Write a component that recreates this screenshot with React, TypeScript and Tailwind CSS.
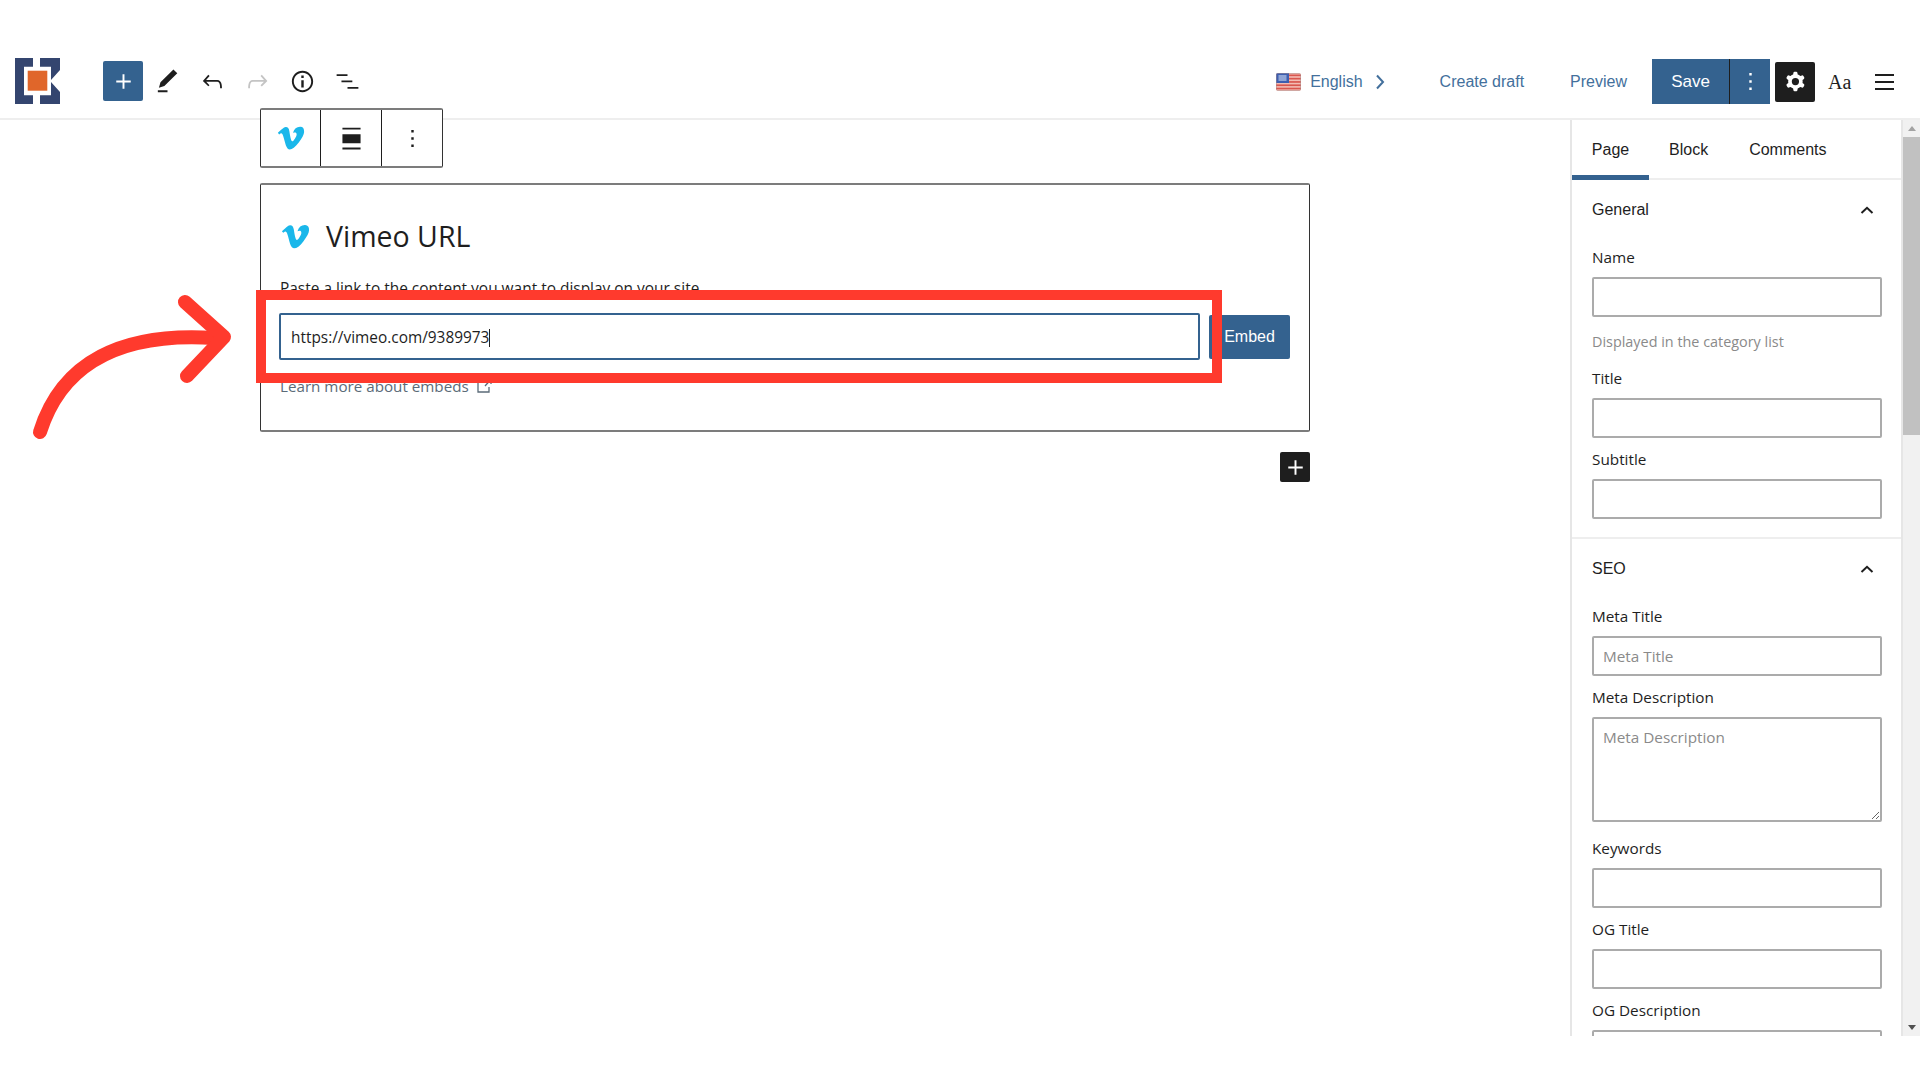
import { FaVimeoV } from "react-icons/fa";

const labelFont = "font-['Open_Sans','Noto_Sans',sans-serif]";
const arialFont = "font-['Liberation_Sans',Arial,sans-serif]";
const inputBox = "block h-10 w-full rounded-[2px] border-2 border-[#ababab] bg-white px-[9px] text-[15.300px] text-[#1e1e1e] outline-none placeholder:text-[#8a8a8a]";

function WpIcon({ d, className = "" }: { d: string; className?: string }) {
  return (
    <svg viewBox="0 0 24 24" width="29" height="29" fill="currentColor" fillRule="evenodd" className={className}>
      <path d={d} />
    </svg>
  );
}

const plus = "M18 11.2h-5.2V6h-1.6v5.2H6v1.6h5.2V18h1.6v-5.2H18z";
const pen = "M20.1 5.1L16.9 2 6.2 12.7l-1.3 4.4 4.5-1.3L20.1 5.1zM4 20.8h8v-1.5H4v1.5z";
const undo = "M18.3 11.7c-.6-.6-1.4-.9-2.3-.9H6.7l2.9-3.3-1.1-1-4.5 5L8.5 16l1-1-2.7-2.7H16c.5 0 .9.2 1.3.5 1 1 1 3.4 1 4.5v.3h1.5v-.2c0-1.5 0-4.3-1.5-5.7z";
const redo = "M15.6 6.5l-1.1 1 2.9 3.3H8c-.9 0-1.7.3-2.3.9-1.4 1.5-1.4 4.2-1.4 5.6v.2h1.5v-.3c0-1.1 0-3.5 1-4.5.3-.3.7-.5 1.3-.5h9.2L14.5 15l1.1 1.1 4.6-4.6-4.6-5z";
const info = "M12 3.2c-4.8 0-8.8 3.9-8.8 8.8 0 4.8 3.9 8.8 8.8 8.8 4.8 0 8.8-3.9 8.8-8.8 0-4.8-4-8.8-8.8-8.8zm0 16c-4 0-7.2-3.3-7.2-7.2C4.8 8 8 4.8 12 4.8s7.2 3.3 7.2 7.2c0 4-3.2 7.2-7.2 7.2zM11 17h2v-6h-2v6zm0-8h2V7h-2v2z";
const listView = "M3 6h9v1.5H3V6zm4 5.2h9v1.5H7v-1.5zm5 5.3h9V18h-9v-1.5z";
const gear = "M10.289 4.836A1 1 0 0111.275 4h1.306a1 1 0 01.987.836l.244 1.466c.787.26 1.503.679 2.108 1.218l1.393-.522a1 1 0 011.216.437l.653 1.13a1 1 0 01-.23 1.273l-1.148.944a6.025 6.025 0 010 2.435l1.149.946a1 1 0 01.23 1.272l-.653 1.13a1 1 0 01-1.216.437l-1.394-.522c-.605.54-1.32.958-2.108 1.218l-.244 1.466a1 1 0 01-.987.836h-1.306a1 1 0 01-.986-.836l-.244-1.466a5.995 5.995 0 01-2.108-1.218l-1.394.522a1 1 0 01-1.217-.436l-.653-1.131a1 1 0 01.23-1.272l1.149-.946a6.026 6.026 0 010-2.435l-1.148-.944a1 1 0 01-.23-1.272l.653-1.131a1 1 0 011.217-.437l1.393.522a5.994 5.994 0 012.108-1.218l.244-1.466zM14.929 12a3 3 0 11-6 0 3 3 0 016 0z";
const dots = "M13 19h-2v-2h2v2zm0-6h-2v-2h2v2zm0-6h-2V5h2v2z";
const align = "M4.500 3h15v1.600h-15zM4.500 8.500h15v7.500h-15zM4.500 19.500h15v1.600h-15z";

function Logo() {
  return (
    <svg viewBox="0 0 45 46" width="45" height="46" className="shrink-0">
      <path d="M0 0h18v8.700H9v28.600h9V46H0z" fill="#34456f" />
      <path d="M25 0H45V12L36 22V8.700H25z" fill="#34456f" />
      <path d="M36 24L45 34V46H25V37.300H36z" fill="#34456f" />
      <rect x="12.700" y="12.700" width="19.600" height="20" fill="#e0662a" />
    </svg>
  );
}

function Flag() {
  return (
    <svg viewBox="0 0 25 18" width="25" height="18" className="shrink-0 rounded-[2px]">
      <rect width="25" height="18" fill="#f3bdb4" />
      {[1.500, 4.800, 8.100, 11.400, 14.700].map((y) => (
        <rect key={y} y={y} width="25" height="1.700" fill="#d9574f" />
      ))}
      <rect width="13" height="10" fill="#3d5fb0" />
      <rect x="2.500" y="2" width="8" height="6" fill="#8fa5d6" />
      <rect x="0.300" y="0.300" width="24.400" height="17.400" rx="1.500" fill="none" stroke="#a98f8f" strokeWidth="0.600" />
    </svg>
  );
}

function Chevron() {
  return (
    <svg viewBox="0 0 16 10" width="16" height="10" fill="none" stroke="#1e1e1e" strokeWidth="2" className="absolute right-[26px] top-[25px]">
      <path d="M2.500 8 8 2.800 13.500 8" />
    </svg>
  );
}

function Field({ label, children, className = "mb-3" }: { label: string; children: React.ReactNode; className?: string }) {
  return (
    <div className={className}>
      <div className={`mb-[9px] h-5 text-[15.300px] leading-[18px] text-[#1e1e1e] ${labelFont}`}>{label}</div>
      {children}
    </div>
  );
}

function Sidebar() {
  return (
    <aside className="flex h-full w-[350px] shrink-0">
      <div className="h-full w-[333px] overflow-hidden border-x-2 border-[#e6e6e6]">
        <div className={`flex h-[60px] border-b-2 border-[#eeeeee] text-[16px] text-[#1e1e1e] ${arialFont}`}>
          <div className="-mb-[2px] flex w-[77px] items-center justify-center border-b-[5px] border-[#34628f] pt-1">Page</div>
          <div className="flex items-center pl-[20px] pt-[2px]">Block</div>
          <div className="flex items-center pl-[41px] pt-[2px]">Comments</div>
        </div>

        <section className="relative border-b-2 border-[#eeeeee] pb-[18px] pl-[20px] pr-[19px]">
          <div className={`flex h-[60px] items-center text-[16px] text-[#1e1e1e] ${arialFont}`}>General</div>
          <Chevron />
          <div className="pt-2">
            <Field label="Name" className="mb-0">
              <input className={inputBox} readOnly />
            </Field>
            <p className={`mb-[17px] mt-[15px] h-5 text-[14.400px] leading-5 text-[#8a8a8a] ${labelFont}`}>Displayed in the category list</p>
            <Field label="Title">
              <input className={inputBox} readOnly />
            </Field>
            <Field label="Subtitle" className="">
              <input className={inputBox} readOnly />
            </Field>
          </div>
        </section>

        <section className="relative pl-[20px] pr-[19px]">
          <div className={`flex h-[60px] items-center text-[16px] text-[#1e1e1e] ${arialFont}`}>SEO</div>
          <Chevron />
          <div className="pt-2">
            <Field label="Meta Title">
              <input className={`${inputBox} ${labelFont}`} placeholder="Meta Title" readOnly />
            </Field>
            <Field label="Meta Description" className="mb-[17px]">
              <textarea
                className={`block h-[105px] w-full rounded-[2px] border-2 border-[#ababab] bg-white px-[9px] py-[7px] text-[15.300px] outline-none placeholder:text-[#8a8a8a] ${labelFont}`}
                placeholder="Meta Description"
                readOnly
              />
            </Field>
            <Field label="Keywords">
              <input className={inputBox} readOnly />
            </Field>
            <Field label="OG Title">
              <input className={inputBox} readOnly />
            </Field>
            <Field label="OG Description">
              <input className={inputBox} readOnly />
            </Field>
          </div>
        </section>
      </div>

      <div className="flex h-full w-[17px] flex-col items-center bg-[#f1f1f1]">
        <div className="flex h-[17px] items-center justify-center text-[#a3a3a3]">
          <div className="h-0 w-0 border-x-[4px] border-b-[5px] border-x-transparent border-b-current" />
        </div>
        <div className="h-[298px] w-full bg-[#c1c1c1]" />
        <div className="flex-1" />
        <div className="flex h-[17px] items-center justify-center text-[#505050]">
          <div className="h-0 w-0 border-x-[4px] border-t-[5px] border-x-transparent border-t-current" />
        </div>
      </div>
    </aside>
  );
}

export default function App() {
  return (
    <div className="relative h-screen w-full overflow-hidden bg-white pt-10">
      {/* Top bar */}
      <header className={`flex h-20 items-center border-b-2 border-[#eeeeee] pl-[15px] pt-1 ${arialFont}`}>
        <Logo />
        <button className="ml-[43px] flex h-10 w-10 items-center justify-center rounded-[2px] bg-[#34628f] text-white">
          <WpIcon d={plus} />
        </button>
        <div className="ml-[10px] flex items-center gap-[16px] text-[#1e1e1e]">
          <WpIcon d={pen} />
          <WpIcon d={undo} />
          <WpIcon d={redo} className="text-[#c4c4c4]" />
          <WpIcon d={info} />
          <WpIcon d={listView} />
        </div>

        <div className="ml-auto mt-px flex items-center text-[16px] text-[#43709c]">
          <Flag />
          <span className="ml-[9px]">English</span>
          <svg viewBox="0 0 10 16" width="10" height="16" fill="none" stroke="#43709c" strokeWidth="2" className="ml-[12px]">
            <path d="M2 1.500 8 8l-6 6.500" />
          </svg>
          <span className="ml-[55px]">Create draft</span>
          <span className="ml-[46px]">Preview</span>
          <div className="ml-[25px] flex h-[45px] items-center bg-[#34628f] text-white">
            <div className="flex h-full w-[78px] items-center justify-center border-r border-[#1e1e1e] text-[17px]">Save</div>
            <div className="flex h-full w-[40px] items-center justify-center">
              <WpIcon d={dots} />
            </div>
          </div>
          <div className="ml-[5px] flex h-10 w-10 items-center justify-center rounded-[2px] bg-[#1e1e1e] text-white">
            <WpIcon d={gear} />
          </div>
          <span className="ml-[13px] w-[24px] font-['Liberation_Serif',serif] text-[20px] text-[#1e1e1e]">Aa</span>
          <div className="ml-[23px] mr-[26px] flex w-[19px] flex-col gap-[5px]">
            <div className="h-[2px] bg-[#1e1e1e]" />
            <div className="h-[2px] bg-[#1e1e1e]" />
            <div className="h-[2px] bg-[#1e1e1e]" />
          </div>
        </div>
      </header>

      <div className="flex h-[916px]">
        <main className="relative min-w-0 flex-1 pl-[260px] pt-[63px]">
          {/* Block toolbar, hangs over the top bar */}
          <div className="absolute left-[260px] top-[-12px] z-10 flex h-[60px] w-[183px] rounded-[2px] border-x border-y-2 border-x-[#333333] border-y-[#7c7c7c] bg-white">
            <div className="flex w-[60px] items-center justify-center border-r border-[#1e1e1e]">
              <FaVimeoV className="text-[30px] text-[#1ab7ea]" />
            </div>
            <div className="flex w-[61px] items-center justify-center border-r border-[#1e1e1e] text-[#1e1e1e]">
              <WpIcon d={align} />
            </div>
            <div className="flex flex-1 items-center justify-center text-[#1e1e1e]">
              <WpIcon d={dots} />
            </div>
          </div>

          {/* Embed placeholder */}
          <div className="h-[249px] w-[1050px] rounded-[2px] border-x border-y-2 border-x-[#333333] border-y-[#7c7c7c] bg-white pl-[18px] pr-[19px] pt-[31px]">
            <div className="flex h-10 items-center">
              <FaVimeoV className="ml-[1px] text-[31px] text-[#1ab7ea]" />
              <h2 className={`ml-[15px] text-[28.500px] font-normal text-[#1e1e1e] ${labelFont}`}>Vimeo URL</h2>
            </div>
            <p className={`mt-[22px] h-5 pl-px text-[15.450px] leading-5 text-[#1e1e1e] ${labelFont}`}>Paste a link to the content you want to display on your site.</p>
            <div className="mt-[15px] flex items-center">
              <div className={`flex h-[47px] w-[921px] items-center rounded-[2px] border-2 border-[#34628f] pl-[10px] pt-[2px] text-[15.400px] text-[#1e1e1e] ${labelFont}`}>
                https://vimeo.com/9389973
                <span className="h-[18px] w-px bg-[#1e1e1e]" />
              </div>
              <button className={`ml-[9px] flex h-[44px] w-[81px] items-center justify-center rounded-[2px] bg-[#34628f] text-[16px] text-white ${arialFont}`}>Embed</button>
            </div>
            <div className={`mt-[16px] flex h-5 items-center pl-px text-[15.200px] text-[#5b6b78] ${labelFont}`}>
              Learn more about embeds
              <svg viewBox="0 0 16 16" width="16" height="16" fill="none" stroke="#5b6b78" strokeWidth="1.300" className="ml-[7px]">
                <path d="M8 3H2v11h11V9M9 8l5.500-6M10.500 1.500h4.500V6" />
              </svg>
            </div>
          </div>

          <div className="flex w-[1050px] justify-end pt-[20px]">
            <button className="flex h-[30px] w-[30px] items-center justify-center rounded-[2px] bg-[#1e1e1e] text-white">
              <WpIcon d={plus} />
            </button>
          </div>
        </main>
        <Sidebar />
      </div>

      {/* Red annotation drawn over the screenshot */}
      <div className="absolute left-[256px] top-[290px] h-[93px] w-[966px] border-[10px] border-[#ff3a2d]" />
      <svg viewBox="0 0 240 200" width="240" height="200" fill="none" stroke="#ff3a2d" strokeWidth="14" strokeLinecap="round" strokeLinejoin="round" className="absolute left-0 top-[280px]">
        <path d="M40 152C62 82 122 52 214 58" />
        <path d="M185 22 224 57 187 96" />
      </svg>
    </div>
  );
}
